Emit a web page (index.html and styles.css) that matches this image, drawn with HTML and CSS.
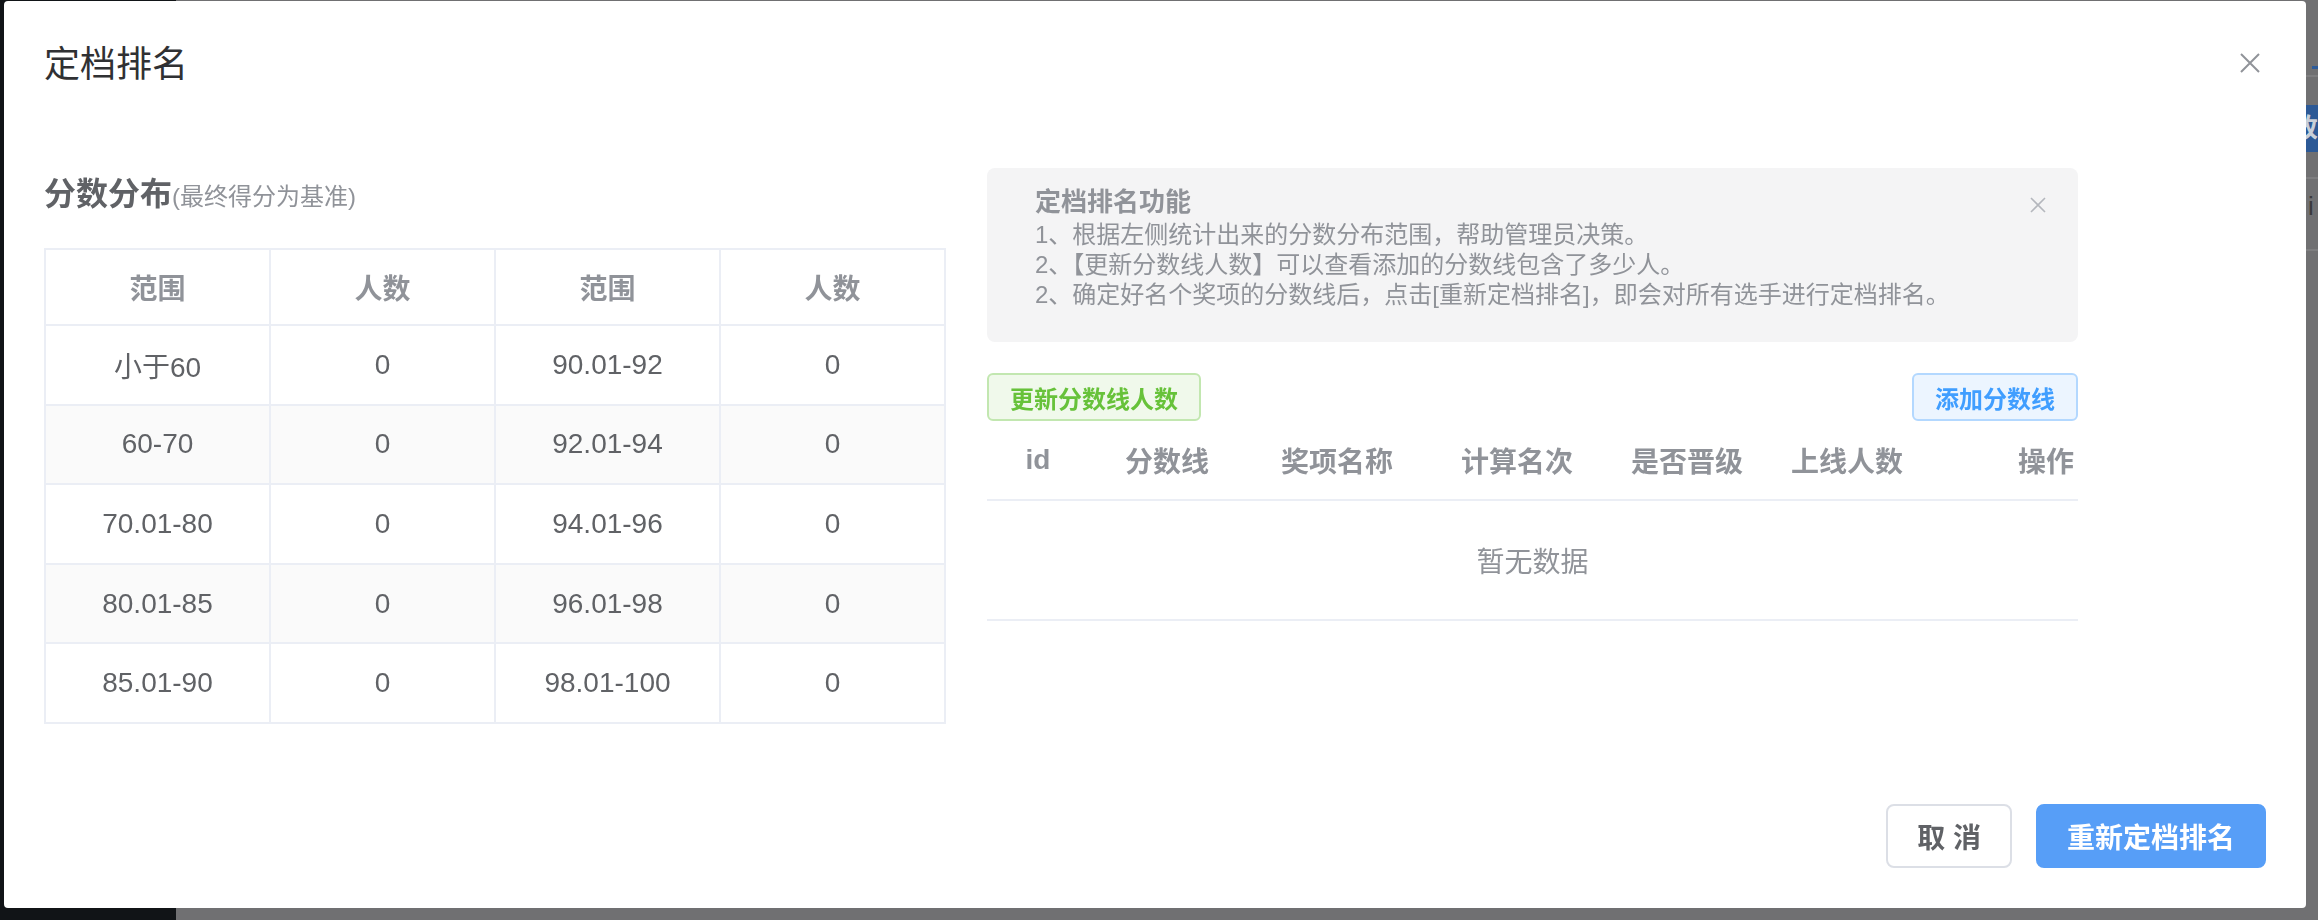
FILE: index.html
```html
<!DOCTYPE html>
<html>
<head>
  <meta charset="UTF-8">
  <title>定档排名</title>
  <link rel="stylesheet" href="styles.css">
</head>
<body>

  <div class="app">
    <aside class="sidebar"></aside>
    <main class="main">
      <div class="main-edge">
        <div class="edge-tab"></div>
        <div class="edge-line"></div>
        <div class="edge-btn">改</div>
        <div class="edge-line edge-line-b"></div>
        <div class="edge-text">i</div>
        <div class="edge-line edge-line-c"></div>
      </div>
    </main>
  </div>

  <div class="dialog">
    <div class="dialog-header">
      <span class="dialog-title">定档排名</span>
      <button class="dialog-close">
        <svg width="20" height="20" viewBox="0 0 20 20">
          <path d="M1 1 L19 19 M19 1 L1 19" stroke="#909399" stroke-width="2" fill="none"/>
        </svg>
      </button>
    </div>

    <div class="dialog-body">
      <div class="left-col">
        <div class="section-title">分数分布<span class="section-sub">(最终得分为基准)</span></div>
        <table class="dist-table">
          <thead>
            <tr><th>范围</th><th>人数</th><th>范围</th><th>人数</th></tr>
          </thead>
          <tbody>
            <tr><td>小于60</td><td>0</td><td>90.01-92</td><td>0</td></tr>
            <tr class="striped"><td>60-70</td><td>0</td><td>92.01-94</td><td>0</td></tr>
            <tr><td>70.01-80</td><td>0</td><td>94.01-96</td><td>0</td></tr>
            <tr class="striped"><td>80.01-85</td><td>0</td><td>96.01-98</td><td>0</td></tr>
            <tr><td>85.01-90</td><td>0</td><td>98.01-100</td><td>0</td></tr>
          </tbody>
        </table>
      </div>

      <div class="right-col">
        <div class="alert">
          <div class="alert-content">
            <div class="alert-title">定档排名功能</div>
            <div class="alert-desc">
              <p>1、根据左侧统计出来的分数分布范围，帮助管理员决策。</p>
              <p>2、【更新分数线人数】可以查看添加的分数线包含了多少人。</p>
              <p>2、确定好名个奖项的分数线后，点击[重新定档排名]，即会对所有选手进行定档排名。</p>
            </div>
          </div>
          <button class="alert-close">
            <svg width="18" height="18" viewBox="0 0 18 18">
              <path d="M2 2 L16 16 M16 2 L2 16" stroke="#b4b7bd" stroke-width="1.6" fill="none"/>
            </svg>
          </button>
        </div>

        <div class="toolbar">
          <button class="btn-plain success">更新分数线人数</button>
          <button class="btn-plain primary">添加分数线</button>
        </div>

        <div class="line-table">
          <div class="line-head">
            <span>id</span>
            <span>分数线</span>
            <span>奖项名称</span>
            <span>计算名次</span>
            <span>是否晋级</span>
            <span>上线人数</span>
            <span class="col-op">操作</span>
          </div>
          <div class="line-empty">暂无数据</div>
        </div>
      </div>
    </div>

    <div class="dialog-footer">
      <button class="btn btn-default">取 消</button>
      <button class="btn btn-primary">重新定档排名</button>
    </div>
  </div>

</body>
</html>
```

FILE: styles.css
```css
body {
  margin: 0;
  font-family: "Liberation Sans", "Noto Sans CJK SC", sans-serif;
  background-color: #707072;
}
.app {
  display: flex;
  height: 920px;
  overflow: hidden;
}
.sidebar {
  width: 176px;
  background-color: #111417;
}
.main {
  flex: 1;
  background-color: #707072;
}
.main-edge {
  display: flex;
  flex-direction: column;
  align-items: flex-end;
}
.edge-tab {
  width: 6px;
  height: 3px;
  margin-top: 66px;
  background-color: #2e5c9a;
}
.edge-line {
  width: 40px;
  height: 2px;
  margin-top: 6px;
  background-color: #7e7e80;
}
.edge-btn {
  width: 40px;
  height: 47px;
  margin-top: 28px;
  background-color: #2c5996;
  color: #c8cfd8;
  font-size: 26px;
  font-weight: bold;
  line-height: 47px;
  text-align: right;
}
.edge-line-b {
  margin-top: 25px;
}
.edge-text {
  margin-top: 12px;
  width: 10px;
  color: #3a3a3c;
  font-size: 26px;
  line-height: 30px;
}
.edge-line-c {
  margin-top: 28px;
}

/* dialog */
.dialog {
  position: fixed;
  left: 4px;
  top: 1px;
  width: 2302px;
  height: 907px;
  background-color: #fff;
  border-radius: 4px;
  display: flex;
  flex-direction: column;
}
.dialog-header {
  display: flex;
  justify-content: space-between;
  align-items: center;
  padding: 40px 40px 20px;
}
.dialog-title {
  font-size: 36px;
  line-height: 48px;
  color: #303133;
}
.dialog-close {
  width: 32px;
  height: 32px;
  padding: 0;
  border: none;
  background: none;
  display: flex;
  align-items: center;
  justify-content: center;
  margin-top: -4px;
}
.dialog-body {
  display: grid;
  grid-template-columns: 902px 1091px;
  column-gap: 41px;
  align-items: start;
  padding: 59px 40px 0;
}
.section-title {
  font-size: 32px;
  font-weight: bold;
  line-height: 52px;
  color: #606266;
  margin-bottom: 25px;
}
.section-sub {
  font-size: 24px;
  font-weight: normal;
  color: #909399;
}
.dist-table {
  width: 902px;
  border-collapse: collapse;
  table-layout: fixed;
  font-size: 28px;
  color: #606266;
}
.dist-table th,
.dist-table td {
  border: 2px solid #ebeef5;
  text-align: center;
  vertical-align: middle;
  padding: 0;
}
.dist-table th {
  height: 74px;
  color: #909399;
  font-weight: bold;
}
.dist-table td {
  height: 77.6px;
}
.dist-table .striped td {
  background-color: #fafafa;
}

/* right side */
.alert {
  display: flex;
  justify-content: space-between;
  background-color: #f4f4f5;
  border-radius: 8px;
  padding: 16px 28px 32px 48px;
  color: #909399;
}
.alert-title {
  font-size: 26px;
  font-weight: bold;
  line-height: 36px;
}
.alert-desc {
  font-size: 24px;
  line-height: 30px;
}
.alert-desc p {
  margin: 0;
}
.alert-close {
  width: 24px;
  height: 24px;
  padding: 0;
  margin-top: 9px;
  border: none;
  background: none;
  display: flex;
  align-items: center;
  justify-content: center;
}
.toolbar {
  display: flex;
  justify-content: space-between;
  margin-top: 31px;
}
.btn-plain {
  height: 48px;
  padding: 0 21px;
  font-family: inherit;
  font-size: 24px;
  font-weight: bold;
  border: 2px solid;
  border-radius: 6px;
}
.btn-plain.success {
  color: #67c23a;
  background-color: #f0f9eb;
  border-color: #c2e7b0;
}
.btn-plain.primary {
  color: #409eff;
  background-color: #ecf5ff;
  border-color: #b3d8ff;
}
.line-head {
  display: grid;
  grid-template-columns: 102px 156px 184px 176px 164px 156px 153px;
  align-items: center;
  box-sizing: border-box;
  height: 80px;
  border-bottom: 2px solid #ebeef5;
  font-size: 28px;
  font-weight: bold;
  color: #909399;
  text-align: center;
}
.line-head .col-op {
  text-align: right;
  padding-right: 4px;
}
.line-empty {
  box-sizing: border-box;
  height: 120px;
  display: flex;
  align-items: center;
  justify-content: center;
  border-bottom: 2px solid #ebeef5;
  font-size: 28px;
  color: #909399;
}

/* footer */
.dialog-footer {
  margin-top: auto;
  display: flex;
  justify-content: flex-end;
  gap: 24px;
  padding: 20px 40px 40px;
}
.btn {
  height: 64px;
  padding: 0 29px;
  font-family: inherit;
  font-size: 28px;
  font-weight: bold;
  border: 2px solid;
  border-radius: 8px;
}
.btn-default {
  color: #606266;
  background-color: #fff;
  border-color: #dcdfe6;
}
.btn-primary {
  color: #fff;
  background-color: #579ef7;
  border-color: #579ef7;
}
```
